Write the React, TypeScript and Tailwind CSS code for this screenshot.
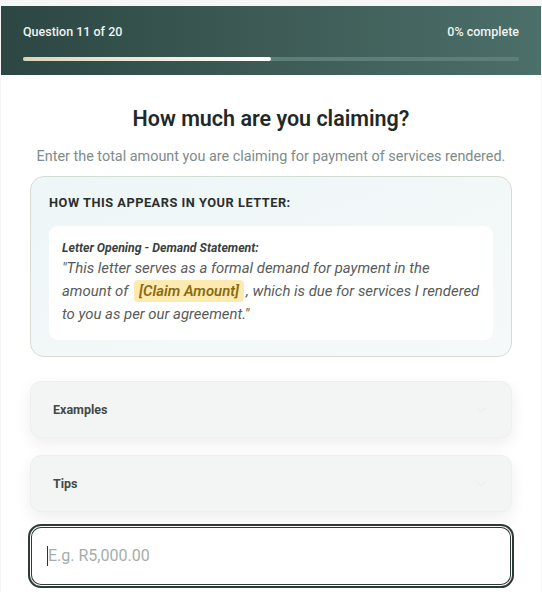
import { ChevronDown } from 'lucide-react';

function Accordion({ label }: { label: string }) {
  return (
    <div className="flex h-[57px] items-center justify-between rounded-[11px] border border-[#eef0ef] bg-[#f3f4f4] px-[22px] shadow-[0_6px_16px_rgba(0,0,0,0.07)]">
      <span className="text-[12.5px] font-bold text-[#444a48]">{label}</span>
      <ChevronDown className="h-4 w-4 text-[#eceeed]" />
    </div>
  );
}

export default function App() {
  return (
    <div className="min-h-[592px] bg-[#f6f6f6] pt-[6px] font-['Roboto',sans-serif]">
      <div className="mx-[1px] bg-white pb-4">
        {/* Progress header */}
        <div className="h-[69px] bg-gradient-to-r from-[#2c4743] via-[#3e5b56] to-[#4b6f69] px-[22px] pt-[17px]">
          <div className="flex items-center justify-between text-[12.5px] font-medium text-[#eef3f1]">
            <span>Question 11 of 20</span>
            <span>0% complete</span>
          </div>
          <div className="mt-[15px] h-[4px] w-full rounded-full bg-[#5e7e79]">
            <div className="h-full w-1/2 rounded-full bg-gradient-to-r from-[#d9d5bc] to-white" />
          </div>
        </div>

        <div className="px-[29px]">
          <h1 className="mt-[28px] text-center text-[21.5px] font-semibold text-[#1f2a28]">
            How much are you claiming?
          </h1>
          <p className="mt-[11px] text-center text-[14.4px] text-[#7d8c88]">
            Enter the total amount you are claiming for payment of services rendered.
          </p>

          {/* Letter preview */}
          <div className="mt-[8px] rounded-[14px] border border-[#d7dcd2] bg-gradient-to-br from-[#eef6f8] to-[#f6f9f9] px-[18px] pb-[16px] pt-[16px]">
            <div className="text-[12.8px] font-bold tracking-[0.04em] text-[#2a2f2e]">
              HOW THIS APPEARS IN YOUR LETTER:
            </div>
            <div className="mt-[14px] rounded-[9px] bg-white pb-[14px] pl-[13px] pr-[8px] pt-[13px]">
              <div className="text-[12.3px] font-bold italic text-[#3a3f3e]">
                Letter Opening - Demand Statement:
              </div>
              <p className="whitespace-nowrap text-[14.9px] italic leading-[23px] text-[#575c5b]">
                "This letter serves as a formal demand for payment in the
                <br />
                amount of{' '}
                <span className="mx-[2px] rounded-[4px] bg-[#fdeab0] px-[5px] py-[2px] font-semibold text-[#8a6b12]">
                  [Claim Amount]
                </span>
                , which is due for services I rendered
                <br />
                to you as per our agreement."
              </p>
            </div>
          </div>

          <div className="mt-[24px] flex flex-col gap-[17px]">
            <Accordion label="Examples" />
            <Accordion label="Tips" />
          </div>

          <div className="-mx-[2px] mt-[12px] flex h-[64px] items-center rounded-[13px] border-2 border-[#2c3b38] px-[17px] shadow-[inset_0_0_0_1px_white,inset_0_0_0_2px_#2c3b38]">
            <span className="h-[20px] w-px bg-[#333]" />
            <span className="text-[16px] text-[#a3aeab]">E.g. R5,000.00</span>
          </div>
        </div>
      </div>
    </div>
  );
}
